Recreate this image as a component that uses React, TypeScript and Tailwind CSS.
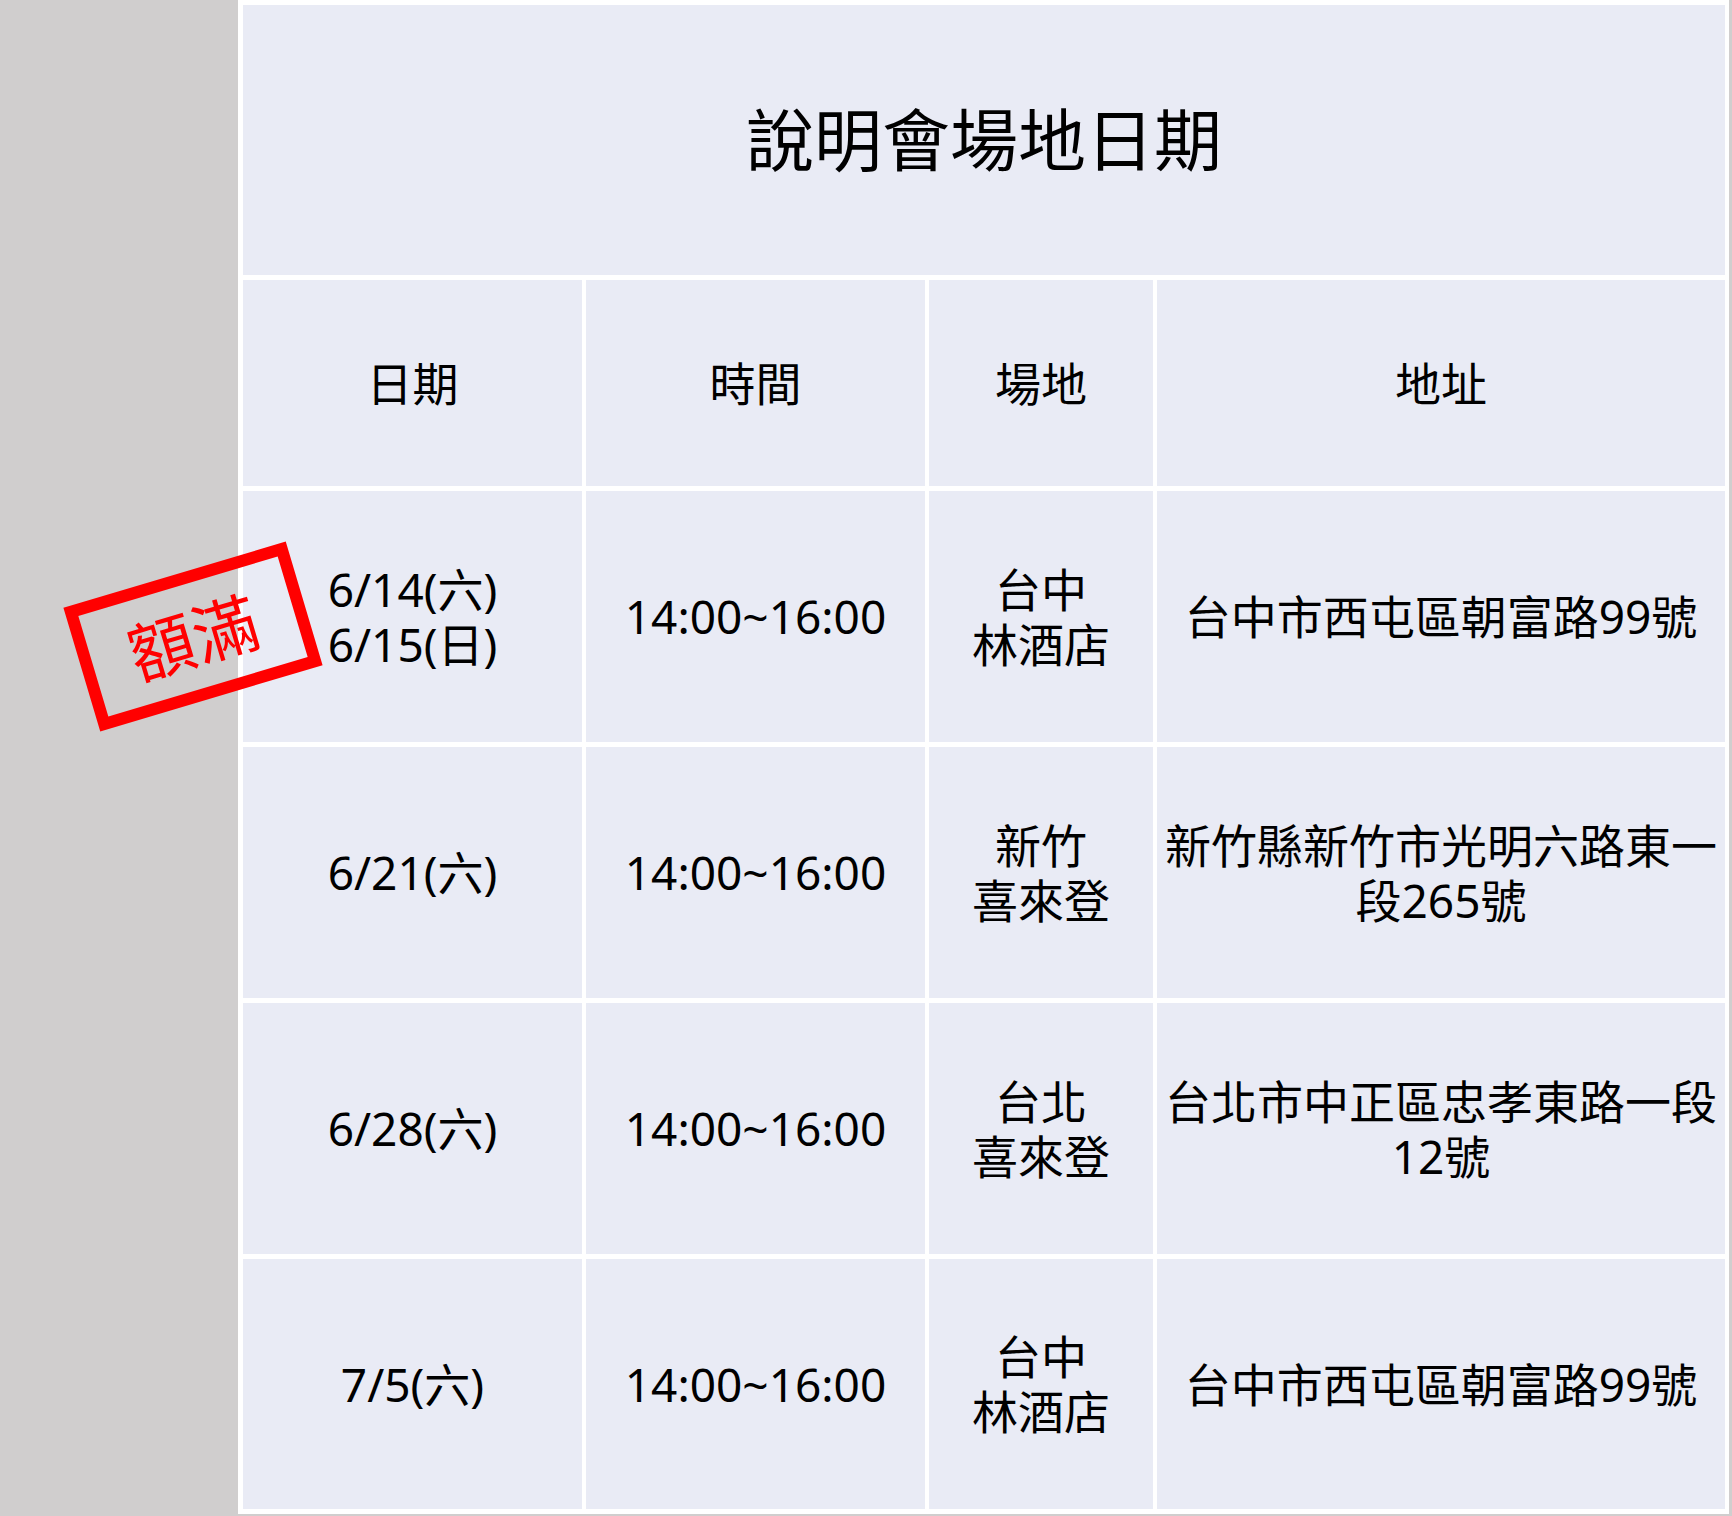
import React from "react";

const cell =
  "bg-[#e9ebf5] flex items-center justify-center text-center text-black text-[46px] leading-[55px] px-1";

type Row = { date: React.ReactNode; venue: React.ReactNode; addr: string };

const rows: Row[] = [
  {
    date: (
      <>
        6/14(六)
        <br />
        6/15(日)
      </>
    ),
    venue: (
      <>
        台中
        <br />
        林酒店
      </>
    ),
    addr: "台中市西屯區朝富路99號",
  },
  {
    date: "6/21(六)",
    venue: (
      <>
        新竹
        <br />
        喜來登
      </>
    ),
    addr: "新竹縣新竹市光明六路東一段265號",
  },
  {
    date: "6/28(六)",
    venue: (
      <>
        台北
        <br />
        喜來登
      </>
    ),
    addr: "台北市中正區忠孝東路一段12號",
  },
  {
    date: "7/5(六)",
    venue: (
      <>
        台中
        <br />
        林酒店
      </>
    ),
    addr: "台中市西屯區朝富路99號",
  },
];

export default function App() {
  return (
    <div className="relative w-[1732px] h-[1516px] bg-[#d0cece] [font-family:'Noto_Sans','Noto_Sans_CJK_TC',sans-serif] overflow-hidden">
      <div className="ml-[238px] w-[1491px] h-[1514px] bg-white pt-[5px] pl-[5px] pr-[4px] pb-[5px]">
        <div className="grid grid-cols-[339px_339px_224px_568px] grid-rows-[270px_206px_251px_251px_251px_250px] gap-x-[4px] gap-y-[5px]">
          <div className="col-span-4 bg-[#e9ebf5] flex items-center justify-center text-black text-[68px] leading-none">
            說明會場地日期
          </div>
          <div className={cell}>日期</div>
          <div className={cell}>時間</div>
          <div className={cell}>場地</div>
          <div className={cell}>地址</div>
          {rows.map((r, i) => (
            <React.Fragment key={i}>
              <div className={cell}>
                <div>{r.date}</div>
              </div>
              <div className={cell}>14:00~16:00</div>
              <div className={cell}>
                <div>{r.venue}</div>
              </div>
              <div className={cell}>
                <div>{r.addr}</div>
              </div>
            </React.Fragment>
          ))}
        </div>
      </div>
      <div className="absolute left-[77px] top-[572px] w-[232px] h-[129px] border-[12px] border-[#ff0000] rotate-[-16.6deg] flex items-center justify-center">
        <span className="text-[#ff0000] text-[66px] leading-none">額滿</span>
      </div>
    </div>
  );
}
